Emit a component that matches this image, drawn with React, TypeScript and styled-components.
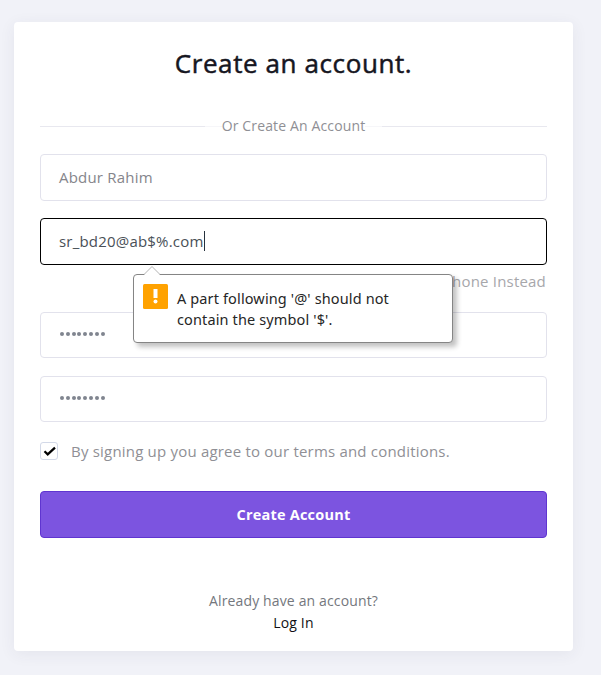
import React from 'react';
import styled, { createGlobalStyle } from 'styled-components';

const GlobalStyle = createGlobalStyle`
  * { box-sizing: border-box; }
  html, body { margin: 0; padding: 0; }
  body {
    background: #f1f2f8;
    font-family: 'Open Sans', 'Noto Sans', sans-serif;
    font-size: 15px;
    color: #8f8f95;
    overflow: hidden;
  }
`;

const Page = styled.main`
  height: 675px;
  padding: 22px 28px 24px 14px;
`;

const Card = styled.section`
  height: 629px;
  padding: 23px 26px 0;
  background: #fff;
  border-radius: 4px;
  box-shadow: 0 3px 16px rgba(60, 60, 90, 0.07);
`;

const Title = styled.h1`
  margin: 0;
  height: 36px;
  line-height: 36px;
  font-size: 26px;
  font-weight: 400;
  letter-spacing: 0.6px;
  -webkit-text-stroke: 0.5px #16161f;
  text-align: center;
  color: #16161f;
`;

const Divider = styled.div`
  display: flex;
  align-items: center;
  height: 20px;
  margin-top: 35px;
  font-size: 14px;
  line-height: 20px;
  letter-spacing: 0.14px;
  white-space: nowrap;
`;

const Rule = styled.span<{ $soft?: boolean }>`
  height: 1px;
  flex: ${(p) => (p.$soft ? '0 0 17px' : '1')};
  background: ${(p) => (p.$soft ? '#f6f6f9' : '#e8e8ef')};
`;

const Form = styled.form`
  margin-top: 18px;
`;

const Field = styled.div<{ $focused?: boolean; $height?: number; $gap?: number }>`
  position: relative;
  display: flex;
  align-items: center;
  height: ${(p) => p.$height ?? 47}px;
  margin-top: ${(p) => p.$gap ?? 0}px;
  padding: 0 18px 2px;
  border: 1px solid ${(p) => (p.$focused ? '#000' : '#e2e2ec')};
  border-radius: 4px;
  color: ${(p) => (p.$focused ? '#495057' : '#85858b')};
`;

const Value = styled.span`
  letter-spacing: 0.2px;
  line-height: 20px;
  white-space: nowrap;
`;

const Caret = styled.span`
  width: 1px;
  height: 20px;
  background: #26323d;
`;

const Dots = styled.div`
  display: flex;
  gap: 1.8px;
  padding-left: 1px;
`;

const Dot = styled.i`
  width: 4px;
  height: 4px;
  border-radius: 50%;
  background: #80858f;
`;

const PhoneLink = styled.div`
  height: 47px;
  padding: 5px 1px 0 0;
  line-height: 22px;
  letter-spacing: 0.2px;
  text-align: right;
  color: #a7a7ab;
`;

const Bubble = styled.div`
  position: absolute;
  z-index: 2;
  left: 92px;
  top: 55px;
  width: 320px;
  height: 69px;
  display: flex;
  padding: 9px;
  gap: 9px;
  background: #fff;
  border: 1px solid #858585;
  border-radius: 4px;
  box-shadow: 4px 4px 5px rgba(0, 0, 0, 0.24);
  color: #262626;
`;

const BubbleArrow = styled.svg`
  position: absolute;
  left: 9px;
  top: -11px;
  overflow: visible;
`;

const WarningIcon = styled.svg`
  flex: none;
`;

const BubbleText = styled.p`
  margin: 4px 0 0;
  font-family: 'Noto Sans', 'Open Sans', sans-serif;
  font-size: 14.5px;
  line-height: 21px;
  letter-spacing: 0.13px;
  white-space: nowrap;
`;

const Terms = styled.label`
  display: flex;
  align-items: center;
  gap: 13px;
  height: 22px;
  margin-top: 18px;
  white-space: nowrap;
`;

const CheckBox = styled.span`
  display: flex;
  width: 18px;
  height: 18px;
  margin-top: -1px;
  border: 1px solid #d3d9e8;
  border-radius: 3px;
`;

const Submit = styled.button`
  display: block;
  width: 100%;
  height: 47px;
  margin-top: 29px;
  padding: 0;
  border: 1px solid #5f35d0;
  border-radius: 4px;
  background: #7c54e0;
  color: #fff;
  font: 700 14.5px/20px 'Open Sans', sans-serif;
  letter-spacing: 0.2px;
`;

const Footer = styled.footer`
  margin-top: 52px;
  font-size: 14px;
  line-height: 22px;
  letter-spacing: 0.14px;
  text-align: center;
  color: #74777d;
`;

const LogIn = styled.a`
  display: block;
  color: #101014;
`;

function PasswordDots() {
  return (
    <Dots>
      {Array.from({ length: 8 }, (_, i) => (
        <Dot key={i} />
      ))}
    </Dots>
  );
}

function ValidationBubble() {
  return (
    <Bubble role="alert">
      <BubbleArrow width="18" height="11">
        <path d="M1 11 L9 2.5 L17 11Z" fill="#fff" />
        <path d="M1.5 10 L9 2.5 L16.5 10" fill="none" stroke="#b4b4b4" />
      </BubbleArrow>
      <WarningIcon width="25" height="25" viewBox="0 0 25 25">
        <rect width="25" height="25" rx="1.5" fill="#ffa200" />
        <rect x="10.5" y="5" width="4" height="9" fill="#fff" />
        <circle cx="12.5" cy="17.5" r="2" fill="#fff" />
      </WarningIcon>
      <BubbleText>
        A part following '@' should not
        <br />
        contain the symbol '$'.
      </BubbleText>
    </Bubble>
  );
}

export default function App() {
  return (
    <>
      <GlobalStyle />
      <Page>
        <Card>
          <Title>Create an account.</Title>
          <Divider>
            <Rule />
            <Rule $soft />
            <span>Or Create An Account</span>
            <Rule $soft />
            <Rule />
          </Divider>
          <Form>
            <Field>
              <Value>Abdur Rahim</Value>
            </Field>
            <Field $focused $gap={17}>
              <Value>sr_bd20@ab$%.com</Value>
              <Caret />
              <ValidationBubble />
            </Field>
            <PhoneLink>Use Phone Instead</PhoneLink>
            <Field $height={46}>
              <PasswordDots />
            </Field>
            <Field $height={46} $gap={18}>
              <PasswordDots />
            </Field>
            <Terms>
              <CheckBox>
                <svg width="16" height="16" viewBox="0 0 16 16">
                  <path d="M3.5 8.2 L6.7 11.4 L14 4.6" fill="none" stroke="#000" strokeWidth="2.2" />
                </svg>
              </CheckBox>
              <Value>By signing up you agree to our terms and conditions.</Value>
            </Terms>
            <Submit type="button">Create Account</Submit>
          </Form>
          <Footer>
            Already have an account?
            <LogIn>Log In</LogIn>
          </Footer>
        </Card>
      </Page>
    </>
  );
}
